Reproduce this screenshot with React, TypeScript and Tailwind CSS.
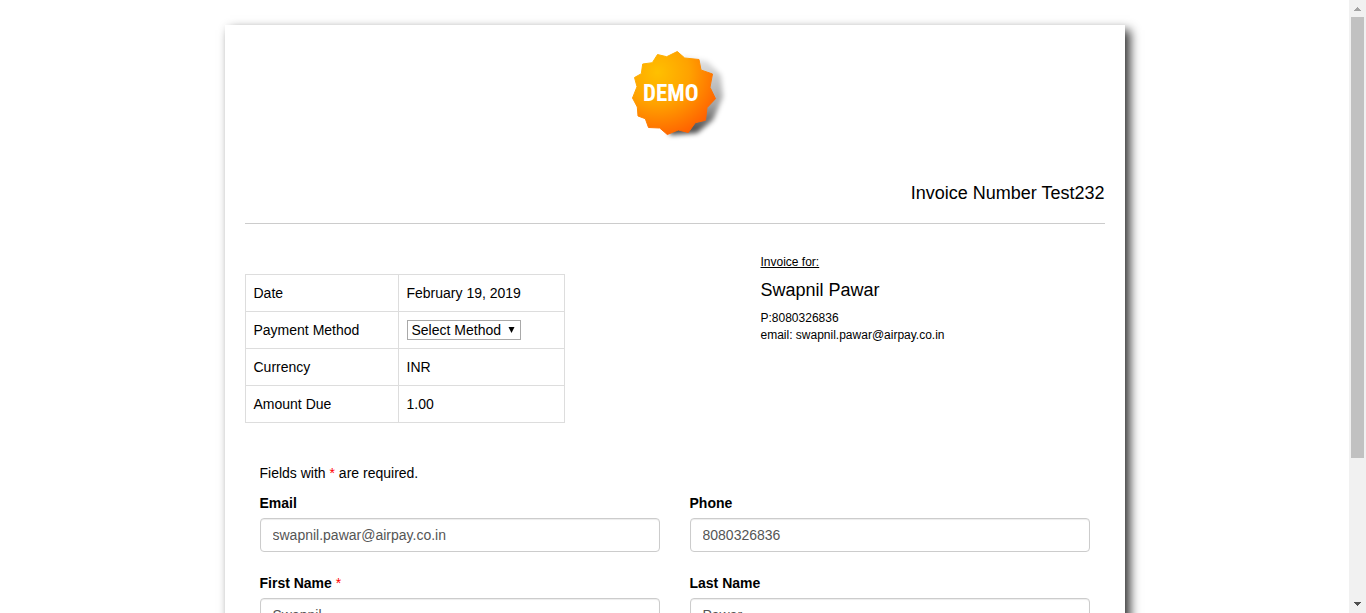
import React from "react";

const details = [
  { label: "Date", value: "February 19, 2019" },
  { label: "Payment Method", value: null },
  { label: "Currency", value: "INR" },
  { label: "Amount Due", value: "1.00" },
];

const fields = [
  { id: "email", label: "Email", value: "swapnil.pawar@airpay.co.in", required: false },
  { id: "phone", label: "Phone", value: "8080326836", required: false },
  { id: "first-name", label: "First Name", value: "Swapnil", required: true },
  { id: "last-name", label: "Last Name", value: "Pawar", required: false },
];

function DemoBadge() {
  return (
    <svg role="img" aria-label="Demo" width="100" height="100" viewBox="0 0 100 100" className="overflow-visible">
      <defs>
        <radialGradient id="badge-fill" cx="0.3" cy="0.25" r="0.85">
          <stop offset="0" stopColor="#ffc000" />
          <stop offset="0.45" stopColor="#ffa200" />
          <stop offset="1" stopColor="#ff5a00" />
        </radialGradient>
        <linearGradient id="badge-shade" x1="0" y1="0" x2="0" y2="1">
          <stop offset="0" stopColor="#000" stopOpacity="0.1" />
          <stop offset="0.6" stopColor="#000" stopOpacity="0.35" />
          <stop offset="1" stopColor="#000" stopOpacity="0.75" />
        </linearGradient>
        <filter id="badge-blur" x="-20%" y="-20%" width="140%" height="140%">
          <feGaussianBlur stdDeviation="2.5" />
        </filter>
      </defs>
      <path
        filter="url(#badge-blur)"
        fill="url(#badge-shade)"
        d="M58 12 L82 16 L96 30 L98 52 L88 75 L72 88 L45 90 L40 60 Z"
      />
      <path
        fill="url(#badge-fill)"
        stroke="url(#badge-fill)"
        strokeLinejoin="round"
        d="M52.3 6.5 L59.7 13 L74 14.5 L76 25 L87.5 29 L85 42.3 L90.5 53.7 L82 62.7 L80.5 75.3 L70.3 77.7 L63.3 87.5 L53.3 85 L42.3 89.5 L34.7 83 L23.5 82.5 L20.3 73.7 L13 71 L12.3 62 L7.5 53 L12 41.7 L9.5 32.5 L16.3 28.7 L17.7 19 L27.3 17.7 L32.5 9.5 L41.7 11.7 Z"
      />
      <text
        x="18"
        y="56"
        fill="#fff"
        className="font-['Roboto_Condensed',Roboto,sans-serif] text-[23px] font-bold"
      >
        DEMO
      </text>
    </svg>
  );
}

function Scrollbar() {
  return (
    <div aria-hidden="true" className="flex w-[17px] shrink-0 flex-col items-center bg-[#f1f1f1]">
      <svg width="17" height="17" shapeRendering="crispEdges" fill="#a3a3a3">
        <path d="M5 11h7v-1h-1v-1h-1v-1h-1v-1h-1v1h-1v1h-1v1h-1z" />
      </svg>
      <div className="min-h-0 w-[13px] flex-1">
        <div className="h-[76.2%] bg-[#c1c1c1]" />
      </div>
      <svg width="17" height="17" shapeRendering="crispEdges" fill="#505050">
        <path d="M5 6h7v1h-1v1h-1v1h-1v1h-1v-1h-1v-1h-1v-1h-1z" />
      </svg>
    </div>
  );
}

export default function App() {
  return (
    <div className="flex h-screen bg-white font-['Liberation_Sans',Arial,sans-serif] text-sm text-black">
      <main className="min-w-0 flex-1 overflow-hidden pt-[25px]">
        <div className="mx-auto w-full max-w-[900px] bg-white px-5 pt-5 pb-48 shadow-[5px_5px_10px_#333]">
          <header>
            <div className="flex justify-center">
              <DemoBadge />
            </div>
            <h1 className="border-b border-[#ccc] pt-[37px] pb-[19px] text-right text-lg leading-[22px]">
              Invoice Number Test232
            </h1>
          </header>

          <section className="flex pt-[30px]">
            <div className="w-3/5 pt-5">
              <table className="w-80 border-collapse leading-5">
                <tbody>
                  {details.map((row) => (
                    <tr key={row.label}>
                      <th scope="row" className="w-[153px] border border-[#ddd] p-2 text-left font-normal">
                        {row.value === null ? <label htmlFor="method">{row.label}</label> : row.label}
                      </th>
                      <td className="border border-[#ddd] p-2">
                        {row.value ?? (
                          <div className="relative flex w-[114px]">
                            <select
                              id="method"
                              className="h-5 w-full appearance-none border border-[#a9a9a9] bg-white pl-1 leading-4"
                            >
                              <option>Select Method</option>
                            </select>
                            <svg
                              aria-hidden="true"
                              className="pointer-events-none absolute top-[7px] right-[6px]"
                              width="7"
                              height="6"
                            >
                              <path d="M.5 0h6L3.5 6z" />
                            </svg>
                          </div>
                        )}
                      </td>
                    </tr>
                  ))}
                </tbody>
              </table>
            </div>
            <address className="w-2/5 text-xs leading-[17px] not-italic">
              <p className="underline">Invoice for:</p>
              <h2 className="py-2 text-lg leading-[23px]">Swapnil Pawar</h2>
              <p>P:8080326836</p>
              <p>email: swapnil.pawar@airpay.co.in</p>
            </address>
          </section>

          <form className="px-[15px] pt-10 leading-5">
            <p className="pb-[10px]">
              Fields with <span className="text-[#f00]">*</span> are required.
            </p>
            <div className="grid grid-cols-2 gap-x-[30px] gap-y-[21px]">
              {fields.map((field) => (
                <div key={field.id}>
                  <label htmlFor={field.id} className="mb-[5px] block font-bold">
                    {field.label}
                    {field.required && <span className="font-normal text-[#f00]"> *</span>}
                  </label>
                  <input
                    id={field.id}
                    type="text"
                    defaultValue={field.value}
                    className="block h-[34px] w-full rounded border border-[#ccc] bg-white px-3 py-[6px] text-[#555] shadow-[inset_0_1px_1px_rgba(0,0,0,0.075)]"
                  />
                </div>
              ))}
            </div>
          </form>
        </div>
      </main>
      <Scrollbar />
    </div>
  );
}
